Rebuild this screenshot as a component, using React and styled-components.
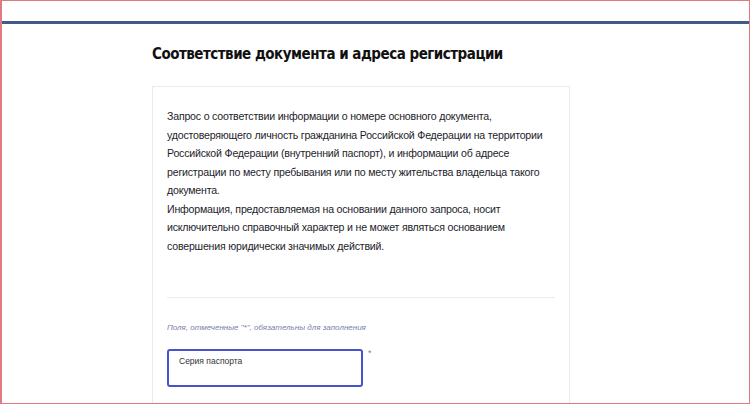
import styled, { createGlobalStyle } from "styled-components";

const GlobalStyle = createGlobalStyle`
  html, body {
    margin: 0;
    padding: 0;
    background: #fff;
  }
`;

const Frame = styled.div`
  box-sizing: border-box;
  width: 750px;
  height: 404px;
  overflow: hidden;
  border: 1px solid #e07a80;
  border-left-width: 2px;
  background: #fff;
  font-family: "Liberation Sans", Arial, sans-serif;
`;

const TopBar = styled.div`
  height: 20px;
  border-bottom: 3px solid #405b8a;
`;

const Main = styled.div`
  width: 418px;
  margin-left: 150px;
  padding-top: 20px;
`;

const Title = styled.h1`
  margin: 0 0 22px;
  font-family: "Liberation Sans Narrow", "DejaVu Sans Condensed", "Liberation Sans", sans-serif;
  font-size: 15px;
  line-height: 20px;
  font-weight: 700;
  color: #111;
  letter-spacing: -0.5px;
`;

const Card = styled.div`
  border: 1px solid #ebebeb;
  border-bottom: none;
  padding: 20px 14px 40px;
  min-height: 300px;
`;

const Intro = styled.p`
  margin: 0 0 42px;
  font-size: 10.6px;
  line-height: 18.5px;
  letter-spacing: -0.2px;
  color: #1d1d2b;
  white-space: nowrap;
`;

const Divider = styled.hr`
  margin: 0;
  border: none;
  border-top: 1px solid #ececec;
`;

const Note = styled.div`
  margin-top: 25px;
  font-size: 8px;
  font-style: italic;
  color: #7a80a8;
`;

const FieldRow = styled.div`
  display: flex;
  align-items: flex-start;
  margin-top: 17px;
`;

const Input = styled.div`
  box-sizing: border-box;
  width: 196px;
  height: 38px;
  border: 2px solid #4654cc;
  border-radius: 3px;
  padding: 5px 10px;
  font-size: 8.5px;
  color: #333;
`;

const Required = styled.span`
  margin-left: 5px;
  font-size: 9px;
  line-height: 9px;
  color: #888;
`;

export default function App() {
  return (
    <>
      <GlobalStyle />
      <Frame>
        <TopBar />
        <Main>
          <Title>Соответствие документа и адреса регистрации</Title>
          <Card>
            <Intro>
              Запрос о соответствии информации о номере основного документа,
              <br />
              удостоверяющего личность гражданина Российской Федерации на территории
              <br />
              Российской Федерации (внутренний паспорт), и информации об адресе
              <br />
              регистрации по месту пребывания или по месту жительства владельца такого
              <br />
              документа.
              <br />
              Информация, предоставляемая на основании данного запроса, носит
              <br />
              исключительно справочный характер и не может являться основанием
              <br />
              совершения юридически значимых действий.
            </Intro>
            <Divider />
            <Note>Поля, отмеченные "*", обязательны для заполнения</Note>
            <FieldRow>
              <Input>Серия паспорта</Input>
              <Required>*</Required>
            </FieldRow>
          </Card>
        </Main>
      </Frame>
    </>
  );
}
